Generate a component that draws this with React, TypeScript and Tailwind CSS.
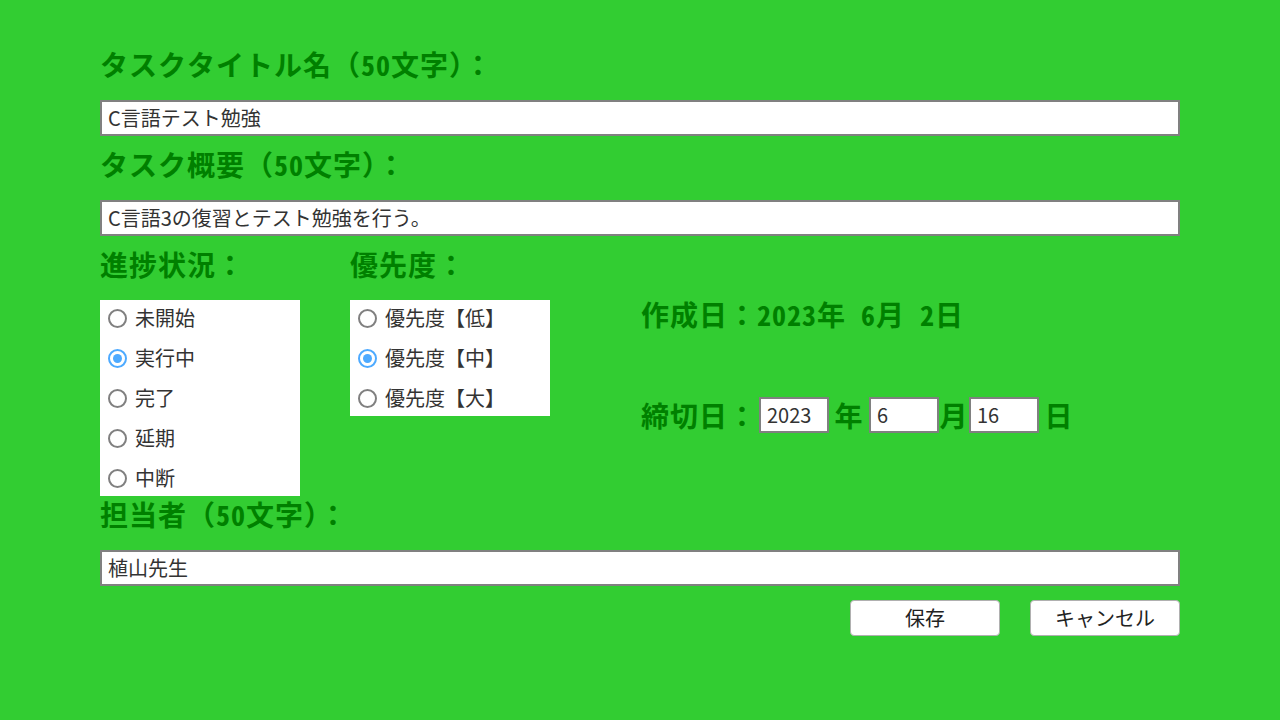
import React from 'react';

const FONT = "font-['Noto_Sans_CJK_JP','Noto_Sans',sans-serif]";
const HEAD_FONT = "font-['Noto_Sans_Mono_CJK_JP','Noto_Sans_CJK_JP',monospace]";

const STATUS = ['未開始', '実行中', '完了', '延期', '中断'];
const PRIORITY = ['優先度【低】', '優先度【中】', '優先度【大】'];

function Radio({ label, checked }: { label: string; checked?: boolean }) {
  return (
    <label className="flex items-center h-[40px] pl-[8px] gap-[8px] text-[20px] text-[#333]">
      <span
        className={
          checked
            ? 'w-[19px] h-[19px] rounded-full border-2 border-[#4daaff] flex items-center justify-center'
            : 'w-[19px] h-[19px] rounded-full border-2 border-[#808080]'
        }
      >
        {checked && <span className="w-[9px] h-[9px] rounded-full bg-[#4daaff]" />}
      </span>
      <span className="leading-none">{label}</span>
    </label>
  );
}

function Heading({ children, className }: { children: React.ReactNode; className?: string }) {
  return (
    <div className={`${HEAD_FONT} text-[28px] font-bold leading-[34px] tracking-[1px] text-[#008000] ${className ?? 'pt-[11px] h-[64px]'}`}>
      {children}
    </div>
  );
}

function TextBox({ value }: { value: string }) {
  return (
    <div className="h-[36px] border-2 border-[#808080] bg-white px-[6px] flex items-center text-[20px] text-[#333]">
      {value}
    </div>
  );
}

function SmallBox({ value, className }: { value: string; className?: string }) {
  return (
    <div className={`${FONT} w-[70px] h-[36px] border-2 border-[#808080] bg-white px-[6px] flex items-center text-[20px] font-normal tracking-normal text-[#333] ${className ?? ''}`}>
      {value}
    </div>
  );
}

export default function App() {
  return (
    <div className={`${FONT} w-[1280px] h-[720px] bg-[#32cd32] px-[100px] pt-[36px]`}>
      <Heading>タスクタイトル名（50文字）：</Heading>
      <TextBox value="C言語テスト勉強" />
      <Heading>タスク概要（50文字）：</Heading>
      <TextBox value="C言語3の復習とテスト勉強を行う。" />

      <div className="flex">
        <div className="w-[250px]">
          <Heading>進捗状況：</Heading>
          <div className="w-[200px] h-[196px] bg-white overflow-hidden">
            <div className="mt-[-2px]">
              {STATUS.map((s) => (
                <Radio key={s} label={s} checked={s === '実行中'} />
              ))}
            </div>
          </div>
        </div>
        <div className="w-[290px]">
          <Heading>優先度：</Heading>
          <div className="w-[200px] h-[116px] bg-white overflow-hidden">
            <div className="mt-[-2px]">
              {PRIORITY.map((p) => (
                <Radio key={p} label={p} checked={p === '優先度【中】'} />
              ))}
            </div>
          </div>
        </div>
        <div className={`${HEAD_FONT} pt-[61px] text-[28px] font-bold text-[#008000] leading-[34px] tracking-[1px]`}>
          <div className="pl-[1px] h-[34px] whitespace-pre">作成日：2023年 6月 2日</div>
          <div className="flex items-center mt-[66px] whitespace-pre">
            <span className="pl-[1px]">締切日：</span>
            <SmallBox value="2023" className="ml-[2px]" />
            <span className="w-[40px] text-center">年</span>
            <SmallBox value="6" />
            <span className="w-[30px] text-center">月</span>
            <SmallBox value="16" />
            <span className="w-[40px] text-center">日</span>
          </div>
        </div>
      </div>

      <Heading className="pt-[1px] h-[54px]">担当者（50文字）：</Heading>
      <TextBox value="植山先生" />

      <div className="flex justify-end gap-[30px] mt-[14px]">
        <button className="w-[150px] h-[36px] bg-white border border-[#b0b0b0] rounded-[4px] text-[20px] text-[#222]">
          保存
        </button>
        <button className="w-[150px] h-[36px] bg-white border border-[#b0b0b0] rounded-[4px] text-[20px] text-[#222]">
          キャンセル
        </button>
      </div>
    </div>
  );
}
